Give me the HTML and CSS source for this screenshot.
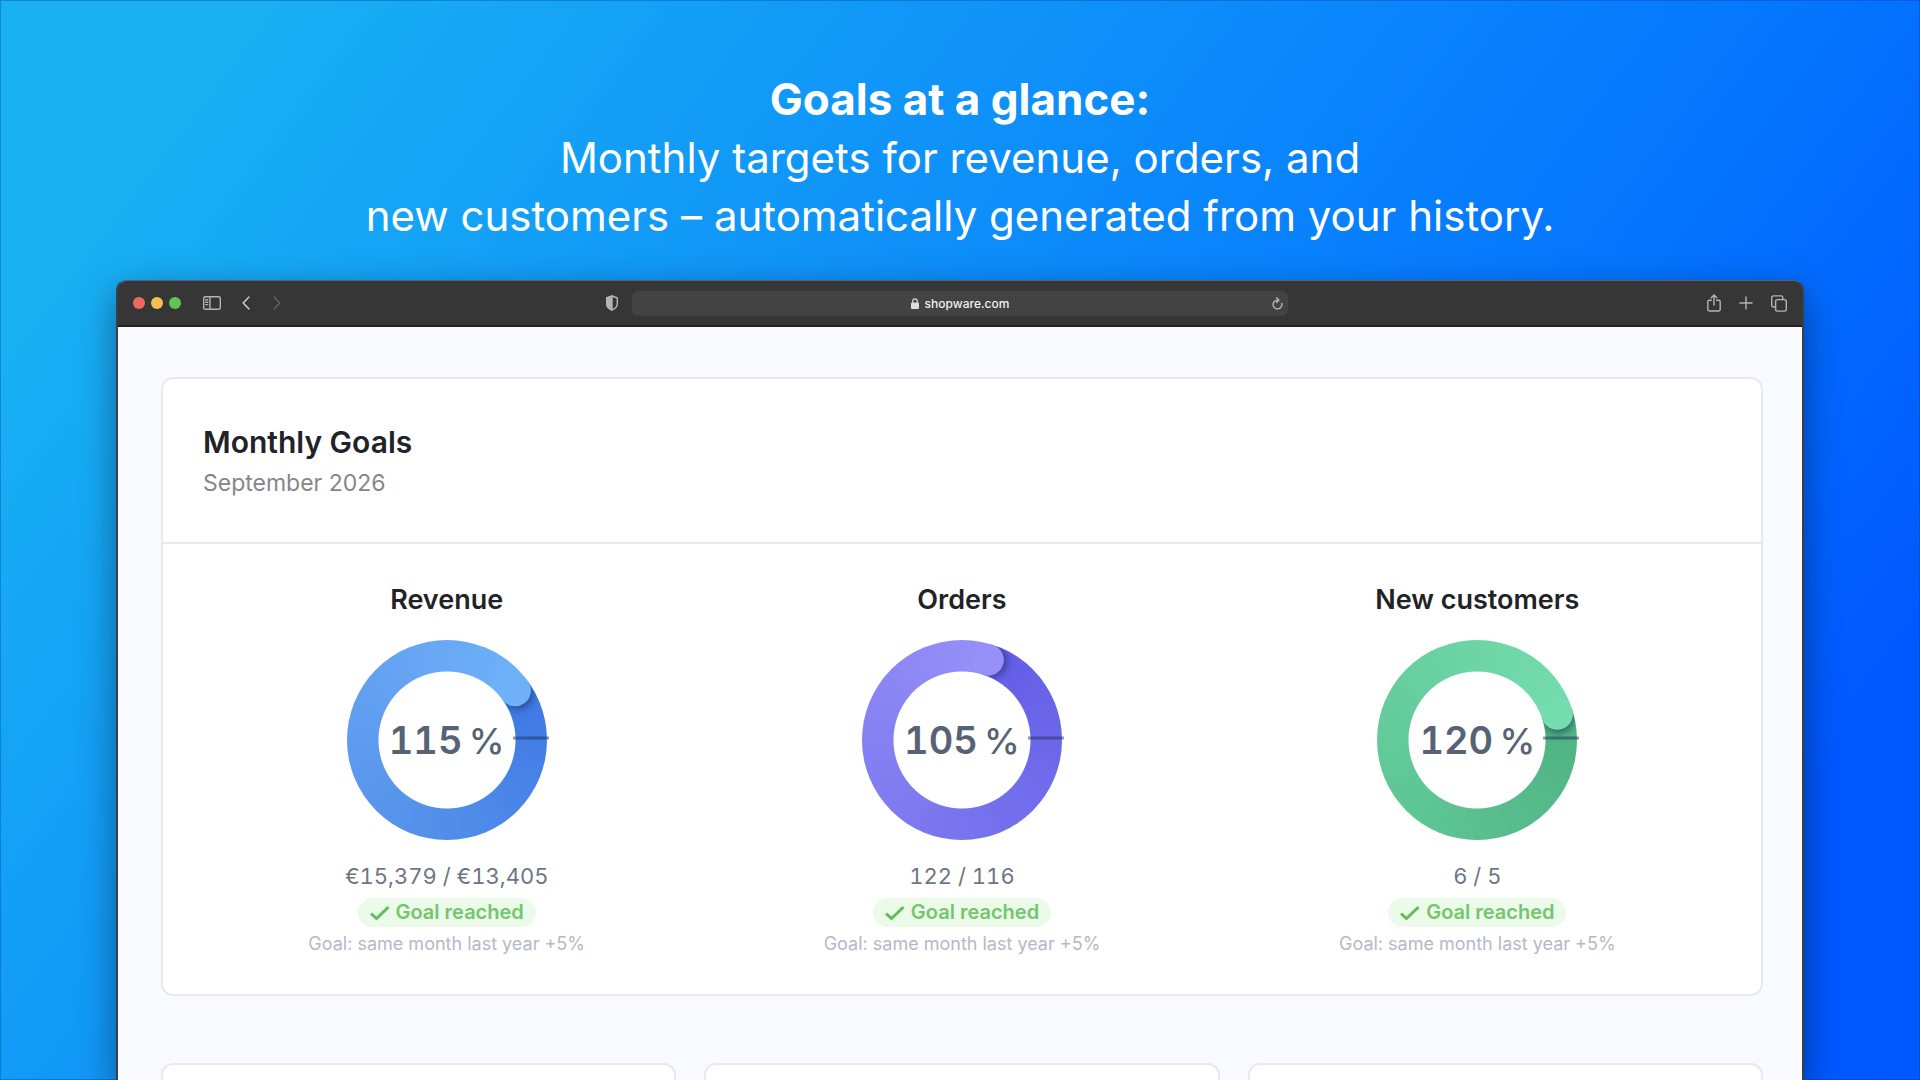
FILE: index.html
```html
<!DOCTYPE html>
<html lang="en">
<head>
  <meta charset="UTF-8" />
  <meta name="viewport" content="width=device-width, initial-scale=1.0" />
  <title>Monthly Goals</title>
  <link rel="stylesheet" href="styles.css">
</head>
<body>
  <h1 class="headline">
    <strong>Goals at a glance:</strong><br>
    Monthly targets for revenue, orders, and<br>
    new customers – automatically generated from your history.
  </h1>

  <div class="browser">
    <div class="toolbar">
      <div class="toolbar-left">
        <div class="lights">
          <span class="light red"></span>
          <span class="light yellow"></span>
          <span class="light green"></span>
        </div>
        <button class="tool sidebar" aria-label="Sidebar">
          <svg width="18" height="14" viewBox="0 0 18 14"><rect x="0.7" y="0.7" width="16.6" height="12.6" rx="1.6"/><path d="M7 0.7v12.6M2.8 3.8h2M2.8 6.2h2M2.8 8.6h2"/></svg>
        </button>
        <button class="tool back" aria-label="Back">
          <svg width="8" height="14" viewBox="0 0 8 14"><path d="M7 1L1.2 7L7 13"/></svg>
        </button>
        <button class="tool forward" aria-label="Forward">
          <svg width="8" height="14" viewBox="0 0 8 14"><path d="M1 1l5.8 6L1 13"/></svg>
        </button>
        <button class="tool shield" aria-label="Privacy report">
          <svg width="12" height="16" viewBox="0 0 12 16"><path d="M6 1l5.3 2v5.4c0 3-2.4 5.3-5.3 6.6c-2.9-1.3-5.3-3.6-5.3-6.6V3z"/><path class="solid" d="M6 1v14C3.1 13.7.7 11.4.7 8.4V3z"/></svg>
        </button>
      </div>
      <div class="address">
        <span class="host">
          <svg width="8" height="11" viewBox="0 0 8 11"><rect x="0" y="4.6" width="8" height="6.4" rx="1" fill="#dcdcdc"/><path d="M1.7 5V3.2a2.3 2.3 0 0 1 4.6 0V5" fill="none" stroke="#dcdcdc" stroke-width="1.2"/></svg>
          shopware.com
        </span>
        <button class="tool reload" aria-label="Reload">
          <svg width="11" height="13" viewBox="0 0 11 13"><path d="M9.7 6.4A4.4 4.4 0 1 1 5.6 3.2H6.8M4.6 0.8L6.9 3.2L4.6 5.5"/></svg>
        </button>
      </div>
      <div class="toolbar-right">
        <button class="tool" aria-label="Share">
          <svg width="14" height="18" viewBox="0 0 14 18"><path d="M4.4 6.3H2.2a1.4 1.4 0 0 0-1.4 1.4v7.9a1.4 1.4 0 0 0 1.4 1.4h9.6a1.4 1.4 0 0 0 1.4-1.4V7.7a1.4 1.4 0 0 0-1.4-1.4H9.6M7 11V1.2M4.2 3.8L7 1l2.8 2.8"/></svg>
        </button>
        <button class="tool" aria-label="New tab">
          <svg width="14" height="14" viewBox="0 0 14 14"><path d="M7 1v12M1 7h12"/></svg>
        </button>
        <button class="tool" aria-label="Tabs">
          <svg width="16" height="17" viewBox="0 0 16 17"><rect x="4.6" y="4.6" width="10.7" height="11.5" rx="1.8"/><path d="M4.6 12H2.4A1.7 1.7 0 0 1 .7 10.3V2.6A1.7 1.7 0 0 1 2.4.9h7.7a1.7 1.7 0 0 1 1.7 1.7v2"/></svg>
        </button>
      </div>
    </div>

    <main class="page">
      <section class="card">
        <header class="card-header">
          <h2>Monthly Goals</h2>
          <p>September 2026</p>
        </header>

        <div class="goals">
          <article class="goal revenue">
            <h3>Revenue</h3>
            <div class="ring">
              <svg viewBox="0 0 200 200">
                <defs>
                  <clipPath id="ahead"><path d="M100 0A100 100 0 0 1 200 100H169A69 69 0 0 0 100 31Z"/></clipPath>
                  <filter id="soft" x="-50%" y="-50%" width="200%" height="200%"><feGaussianBlur stdDeviation="3"/></filter>
                </defs>
                <g transform="rotate(54 100 100)">
                  <g clip-path="url(#ahead)">
                    <circle class="cap-shadow" cx="104" cy="16" r="16" filter="url(#soft)"/>
                  </g>
                  <circle class="cap" cx="100" cy="15.8" r="15.8"/>
                </g>
                <path class="mark" d="M166 98h36"/>
              </svg>
              <span class="percent">115<span class="unit">&#8201;%</span></span>
            </div>
            <p class="amount">€15,379 / €13,405</p>
            <p class="badge"><svg width="20" height="16" viewBox="0 0 20 16"><path d="M1 8.5l5.5 5L18.5 2"/></svg>Goal reached</p>
            <p class="note">Goal: same month last year +5%</p>
          </article>

          <article class="goal orders">
            <h3>Orders</h3>
            <div class="ring">
              <svg viewBox="0 0 200 200">
                <g transform="rotate(18 100 100)">
                  <g clip-path="url(#ahead)">
                    <circle class="cap-shadow" cx="104" cy="16" r="16" filter="url(#soft)"/>
                  </g>
                  <circle class="cap" cx="100" cy="15.8" r="15.8"/>
                </g>
                <path class="mark" d="M166 98h36"/>
              </svg>
              <span class="percent">105<span class="unit">&#8201;%</span></span>
            </div>
            <p class="amount">122 / 116</p>
            <p class="badge"><svg width="20" height="16" viewBox="0 0 20 16"><path d="M1 8.5l5.5 5L18.5 2"/></svg>Goal reached</p>
            <p class="note">Goal: same month last year +5%</p>
          </article>

          <article class="goal customers">
            <h3>New customers</h3>
            <div class="ring">
              <svg viewBox="0 0 200 200">
                <g transform="rotate(72 100 100)">
                  <g clip-path="url(#ahead)">
                    <circle class="cap-shadow" cx="104" cy="16" r="16" filter="url(#soft)"/>
                  </g>
                  <circle class="cap" cx="100" cy="15.8" r="15.8"/>
                </g>
                <path class="mark" d="M166 98h36"/>
              </svg>
              <span class="percent">120<span class="unit">&#8201;%</span></span>
            </div>
            <p class="amount">6 / 5</p>
            <p class="badge"><svg width="20" height="16" viewBox="0 0 20 16"><path d="M1 8.5l5.5 5L18.5 2"/></svg>Goal reached</p>
            <p class="note">Goal: same month last year +5%</p>
          </article>
        </div>
      </section>

      <div class="next-row">
        <section class="card"></section>
        <section class="card"></section>
        <section class="card"></section>
      </div>
    </main>
  </div>
</body>
</html>
```
FILE: styles.css
```css
* {
  box-sizing: border-box;
}

body {
  margin: 0;
  height: 100vh;
  padding: 70px 116px 0;
  display: flex;
  flex-direction: column;
  overflow: hidden;
  font-family: Inter, "Liberation Sans", sans-serif;
  background: linear-gradient(127deg, #18aff3 10%, #0f92f9 38%, #0578ff 64%, #0058ff 88%);
  box-shadow: inset 0 0 0 1px rgba(0, 50, 130, 0.3);
}

h1, h2, h3, p {
  margin: 0;
}

.headline {
  margin-bottom: 35px;
  font-size: 42px;
  line-height: 58px;
  font-weight: 400;
  text-align: center;
  color: #fff;
}

.headline strong {
  font-size: 44px;
  font-weight: 700;
}

/* browser window */
.browser {
  flex: 1;
  min-height: 0;
  display: flex;
  flex-direction: column;
  border: 2px solid #3a3f47;
  border-top: 1px solid #55606a;
  border-bottom: none;
  border-radius: 10px 10px 0 0;
  overflow: hidden;
  box-shadow: 0 12px 36px rgba(0, 0, 0, 0.4);
}

.toolbar {
  flex: none;
  height: 46px;
  display: grid;
  grid-template-columns: 1fr 656px 1fr;
  gap: 14px;
  align-items: center;
  padding: 0 15px;
  background: #363636;
  border-bottom: 2px solid #222;
}

.toolbar-left, .toolbar-right {
  display: flex;
  align-items: center;
}

.toolbar-right {
  justify-content: flex-end;
  gap: 18px;
}

.lights {
  display: flex;
  gap: 6px;
}

.light {
  width: 12px;
  height: 12px;
  border-radius: 50%;
}

.red { background: #ed6a5e; }
.yellow { background: #f4bf4f; }
.green { background: #61c554; }

.tool {
  display: flex;
  padding: 0;
  border: none;
  background: none;
  cursor: pointer;
}

.tool svg {
  fill: none;
  stroke: #b4b4b4;
  stroke-width: 1.4;
  stroke-linecap: round;
  stroke-linejoin: round;
}

.tool .solid { fill: #b4b4b4; }
.sidebar { margin-left: 22px; }
.back { margin-left: 21px; }
.back svg { stroke: #d0d0d0; }
.forward { margin-left: 23px; }
.forward svg { stroke: #646464; }
.shield { margin-left: auto; }

.address {
  position: relative;
  height: 25px;
  display: flex;
  align-items: center;
  justify-content: center;
  border-radius: 6px;
  background: #434343;
}

.host {
  display: flex;
  align-items: center;
  gap: 6px;
  font-size: 12px;
  font-weight: 500;
  color: #f0f0f0;
}

.reload {
  position: absolute;
  right: 5px;
}

/* dashboard */
.page {
  flex: 1;
  padding: 50px 39px 0 43px;
  background: #f9faff;
}

.card {
  border: 2px solid #e8e8f0;
  border-radius: 12px;
  background: #fff;
}

.card-header {
  padding: 45px 40px 44px;
  border-bottom: 2px solid #e8e8f0;
}

.card-header h2 {
  margin-bottom: 8px;
  font-size: 30px;
  line-height: 36px;
  font-weight: 600;
  color: #222327;
}

.card-header p {
  font-size: 23px;
  line-height: 30px;
  color: #86868a;
}

.goals {
  display: grid;
  grid-template-columns: repeat(3, 1fr);
  padding: 40px 26px 37px;
}

.goal {
  display: flex;
  flex-direction: column;
  align-items: center;
}

.goal h3 {
  font-size: 27px;
  line-height: 32px;
  font-weight: 600;
  color: #222327;
}

.revenue {
  --end: 54deg;
  --dark: #3d78e4;
  --mid: #5794eb;
  --light: #6fb1f9;
}

.orders {
  --end: 18deg;
  --dark: #625de6;
  --mid: #7874ee;
  --light: #9690f8;
}

.customers {
  --end: 72deg;
  --dark: #4fb181;
  --mid: #5fc796;
  --light: #74dcae;
}

.ring {
  position: relative;
  width: 200px;
  height: 200px;
  margin: 24px 0 22px;
  display: grid;
  place-items: center;
  border-radius: 50%;
  background:
    radial-gradient(circle, #fff 68px, transparent 69px),
    conic-gradient(from var(--end), var(--dark), var(--mid) 45%, var(--light));
}

.ring svg {
  position: absolute;
  inset: 0;
  overflow: visible;
}

.cap { fill: var(--light); }

.cap-shadow {
  fill: #1c2a5c;
  opacity: 0.5;
}

.mark {
  stroke: #20305c;
  stroke-width: 3;
  opacity: 0.5;
}

.percent {
  position: relative;
  font-size: 38px;
  font-weight: 600;
  font-variant-numeric: tabular-nums;
  color: #566375;
}

.unit {
  font-size: 36px;
  font-weight: 500;
}

.amount {
  margin-bottom: 8px;
  font-size: 22px;
  line-height: 28px;
  font-variant-numeric: tabular-nums;
  color: #6c7686;
}

.badge {
  display: flex;
  align-items: center;
  gap: 6px;
  margin-bottom: 4px;
  padding: 0 12px;
  border-radius: 15px;
  font-size: 20px;
  line-height: 29px;
  font-weight: 600;
  color: #74c66c;
  background: #ebfae9;
}

.badge svg {
  fill: none;
  stroke: #5fbe5a;
  stroke-width: 3;
}

.note {
  font-size: 18px;
  line-height: 26px;
  color: #b4b9c8;
}

.next-row {
  display: grid;
  grid-template-columns: repeat(3, 1fr);
  gap: 28px;
  margin-top: 67px;
}

.next-row .card {
  height: 320px;
}
```
